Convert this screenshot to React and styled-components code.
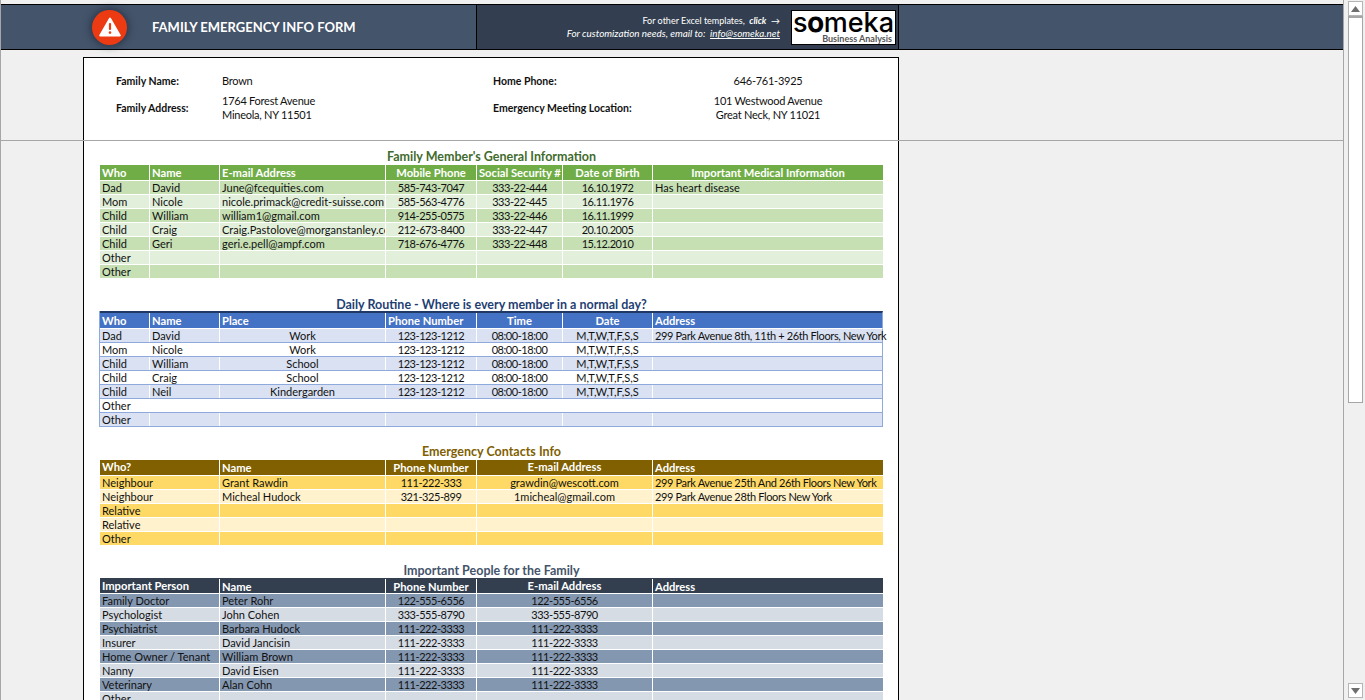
import React from "react";
import styled, { createGlobalStyle } from "styled-components";

const FIVE_COLS = "50px 70px 166px 91px 86px 90px 230px";
const FOUR_COLS = "120px 166px 91px 176px 230px";

const palettes = {
  green: { head: "#70ad47", odd: "#c6e0b4", even: "#e2efda", title: "#3f6b2d" },
  blue: { head: "#4472c4", odd: "#d9e1f2", even: "#fff", title: "#1f3f73" },
  gold: { head: "#806000", odd: "#ffd966", even: "#fff2cc", title: "#806000" },
  slate: { head: "#333f4f", odd: "#8497b0", even: "#d6dce4", title: "#44546a" },
};

const familyHead = [
  { t: "Who" },
  { t: "Name" },
  { t: "E-mail Address" },
  { t: "Mobile Phone", c: true },
  { t: "Social Security #", c: true },
  { t: "Date of Birth", c: true },
  { t: "Important Medical Information", c: true },
];
const familyRows = [
  ["Dad", "David", "June@fcequities.com", "585-743-7047", "333-22-444", "16.10.1972", "Has heart disease"],
  ["Mom", "Nicole", "nicole.primack@credit-suisse.com", "585-563-4776", "333-22-445", "16.11.1976", ""],
  ["Child", "William", "william1@gmail.com", "914-255-0575", "333-22-446", "16.11.1999", ""],
  ["Child", "Craig", "Craig.Pastolove@morganstanley.com", "212-673-8400", "333-22-447", "20.10.2005", ""],
  ["Child", "Geri", "geri.e.pell@ampf.com", "718-676-4776", "333-22-448", "15.12.2010", ""],
  ["Other", "", "", "", "", "", ""],
  ["Other", "", "", "", "", "", ""],
];

const routineHead = [
  { t: "Who" },
  { t: "Name" },
  { t: "Place" },
  { t: "Phone Number" },
  { t: "Time", c: true },
  { t: "Date", c: true },
  { t: "Address" },
];
const routineRows = [
  ["Dad", "David", "Work", "123-123-1212", "08:00-18:00", "M,T,W,T,F,S,S", "299 Park Avenue 8th, 11th + 26th Floors, New York"],
  ["Mom", "Nicole", "Work", "123-123-1212", "08:00-18:00", "M,T,W,T,F,S,S", ""],
  ["Child", "William", "School", "123-123-1212", "08:00-18:00", "M,T,W,T,F,S,S", ""],
  ["Child", "Craig", "School", "123-123-1212", "08:00-18:00", "M,T,W,T,F,S,S", ""],
  ["Child", "Neil", "Kindergarden", "123-123-1212", "08:00-18:00", "M,T,W,T,F,S,S", ""],
  ["Other", "", "", "", "", "", ""],
  ["Other", "", "", "", "", "", ""],
];

const contactHead = [
  { t: "Who?", up: true },
  { t: "Name" },
  { t: "Phone Number", c: true },
  { t: "E-mail Address", c: true, up: true },
  { t: "Address" },
];
const contactRows = [
  ["Neighbour", "Grant Rawdin", "111-222-333", "grawdin@wescott.com", "299 Park Avenue 25th And 26th Floors New York"],
  ["Neighbour", "Micheal Hudock", "321-325-899", "1micheal@gmail.com", "299 Park Avenue 28th Floors New York"],
  ["Relative", "", "", "", ""],
  ["Relative", "", "", "", ""],
  ["Other", "", "", "", ""],
];

const peopleHead = [
  { t: "Important Person", up: true },
  { t: "Name" },
  { t: "Phone Number", c: true },
  { t: "E-mail Address", c: true, up: true },
  { t: "Address" },
];
const peopleRows = [
  ["Family Doctor", "Peter Rohr", "122-555-6556", "122-555-6556", ""],
  ["Psychologist", "John Cohen", "333-555-8790", "333-555-8790", ""],
  ["Psychiatrist", "Barbara Hudock", "111-222-3333", "111-222-3333", ""],
  ["Insurer", "David Jancisin", "111-222-3333", "111-222-3333", ""],
  ["Home Owner / Tenant", "William Brown", "111-222-3333", "111-222-3333", ""],
  ["Nanny", "David Eisen", "111-222-3333", "111-222-3333", ""],
  ["Veterinary", "Alan Cohn", "111-222-3333", "111-222-3333", ""],
  ["Other", "", "", "", ""],
];

// lato's numerals run wider than the reference font, so pull those cells in a bit
const trackingFor = (text) => {
  if (/^[\d.:-]+$/.test(text)) return -0.45;
  if (/^\d+ Park/.test(text)) return -0.36;
  return 0;
};

const App = () => {
  return (
    <Window>
      <GlobalStyle />
      <Main>
        <FrozenPane>
          <Banner>
            <BannerLeft>
              <WarningBadge>
                <svg width="22" height="20" viewBox="0 0 22 20">
                  <path d="M11 1.5 L20.8 18.5 H1.2 Z" fill="#fff" stroke="#fff" strokeWidth="2" strokeLinejoin="round" />
                  <rect x="9.9" y="6" width="2.2" height="7" rx="1" fill="#ec3b13" />
                  <circle cx="11" cy="15.6" r="1.3" fill="#ec3b13" />
                </svg>
              </WarningBadge>
              <BannerTitle>FAMILY EMERGENCY INFO FORM</BannerTitle>
            </BannerLeft>
            <BannerMid>
              <Promo>
                <PromoLine>
                  For other Excel templates,&nbsp; <b><i>click</i></b> &nbsp;→
                </PromoLine>
                <PromoLine $italic>
                  For customization needs, email to:&nbsp; <u>info@someka.net</u>
                </PromoLine>
              </Promo>
              <Logo>
                <LogoWord>
                  s<LogoO>o</LogoO>meka
                </LogoWord>
                <LogoSub>Business Analysis</LogoSub>
              </Logo>
            </BannerMid>
          </Banner>
          <TopSheet>
            <InfoGrid>
              <InfoLabel>Family Name:</InfoLabel>
              <InfoValue>Brown</InfoValue>
              <InfoLabel>Home Phone:</InfoLabel>
              <InfoValue $center>646-761-3925</InfoValue>
              <InfoLabel>Family Address:</InfoLabel>
              <InfoValue>
                1764 Forest Avenue
                <br />
                Mineola, NY 11501
              </InfoValue>
              <InfoLabel>Emergency Meeting Location:</InfoLabel>
              <InfoValue $center>
                101 Westwood Avenue
                <br />
                Great Neck, NY 11021
              </InfoValue>
            </InfoGrid>
          </TopSheet>
        </FrozenPane>
        <BottomPane>
          <Sheet>
            <DataTable
              tone="green"
              top={8}
              titleLine={16}
              title="Family Member's General Information"
              cols={FIVE_COLS}
              head={familyHead}
              rows={familyRows}
              centered={[3, 4, 5]}
            />
            <DataTable
              tone="blue"
              top={16}
              titleLine={20}
              title="Daily Routine - Where is every member in a normal day?"
              cols={FIVE_COLS}
              head={routineHead}
              rows={routineRows}
              centered={[2, 3, 4, 5]}
              boxed
            />
            <DataTable
              tone="gold"
              top={17}
              titleLine={16}
              title="Emergency Contacts Info"
              cols={FOUR_COLS}
              head={contactHead}
              rows={contactRows}
              centered={[2, 3]}
            />
            <DataTable
              tone="slate"
              top={16}
              titleLine={18}
              headDrop={1}
              title="Important People for the Family"
              cols={FOUR_COLS}
              head={peopleHead}
              rows={peopleRows}
              centered={[2, 3]}
            />
          </Sheet>
        </BottomPane>
      </Main>
      <ScrollGutter>
        <ScrollBar>
          <ScrollButton>
            <svg width="9" height="6" viewBox="0 0 9 6"><path d="M4.5 0 L9 6 H0 Z" fill="#6e6e6e" /></svg>
          </ScrollButton>
          <ScrollThumb />
          <ScrollTrack />
          <ScrollButton>
            <svg width="9" height="6" viewBox="0 0 9 6"><path d="M0 0 H9 L4.5 6 Z" fill="#6e6e6e" /></svg>
          </ScrollButton>
        </ScrollBar>
      </ScrollGutter>
    </Window>
  );
};

const DataTable = ({ tone, top, titleLine, headDrop = 0, title, cols, head, rows, centered, boxed }) => {
  const p = palettes[tone];
  return (
    <Section $top={top}>
      <SectionTitle $color={p.title} $line={titleLine}>
        {title}
      </SectionTitle>
      <HeadRow $cols={cols} $bg={p.head} $boxed={boxed} $drop={headDrop}>
        {head.map((h, i) => (
          <HeadCell key={i} $center={h.c} $up={h.up}>
            {h.t}
          </HeadCell>
        ))}
      </HeadRow>
      {rows.map((row, r) => (
        <BodyRow key={r} $cols={cols} $bg={r % 2 === 0 ? p.odd : p.even} $boxed={boxed}>
          {row.map((text, i) => (
            <BodyCell
              key={i}
              $center={centered.includes(i)}
              $spill={boxed && i === row.length - 1}
              $track={trackingFor(text)}
            >
              {text}
            </BodyCell>
          ))}
        </BodyRow>
      ))}
    </Section>
  );
};

const GlobalStyle = createGlobalStyle`
  html, body {
    margin: 0;
    padding: 0;
    height: 100%;
    overflow: hidden;
    background: #f0f0f0;
  }
  body {
    font-family: "Lato", "Liberation Sans", sans-serif;
    font-size: 11px;
    color: #111;
  }
`;

const Window = styled.div`
  display: flex;
  height: 700px;
  width: 1365px;
  overflow: hidden;
  background: #f0f0f0;
`;
const Main = styled.div`
  width: 1344px;
  flex: none;
  box-sizing: border-box;
  display: flex;
  flex-direction: column;
  border-left: 1px solid #a6a6a6;
  border-right: 1px solid #a6a6a6;
`;
const FrozenPane = styled.div`
  height: 141px;
  flex: none;
  box-sizing: border-box;
  padding-top: 4px;
  border-bottom: 1px solid #a6a6a6;
  display: flex;
  flex-direction: column;
`;
const Banner = styled.div`
  height: 46px;
  flex: none;
  box-sizing: border-box;
  display: flex;
  background: #44546a;
  border-top: 1px solid #000;
  border-bottom: 1px solid #000;
`;
const BannerLeft = styled.div`
  width: 475px;
  box-sizing: border-box;
  display: flex;
  align-items: center;
  gap: 25px;
  padding-left: 91px;
`;
const WarningBadge = styled.div`
  width: 35px;
  height: 35px;
  border-radius: 50%;
  background: #ec3b13;
  box-shadow: 0 0 7px 2px rgba(25, 35, 55, 0.55);
  display: flex;
  align-items: center;
  justify-content: center;
`;
const BannerTitle = styled.div`
  color: #fff;
  font-size: 13px;
  font-weight: 700;
  white-space: nowrap;
`;
const BannerMid = styled.div`
  width: 423px;
  box-sizing: border-box;
  background: #333f50;
  border-left: 1px solid #000;
  border-right: 1px solid #000;
  display: flex;
  align-items: center;
  justify-content: flex-end;
  gap: 11px;
  padding-right: 2px;
`;
const Promo = styled.div`
  display: flex;
  flex-direction: column;
  align-items: flex-end;
  color: #fff;
  line-height: 13px;
  white-space: nowrap;
`;
const PromoLine = styled.div`
  font-style: ${(p) => (p.$italic ? "italic" : "normal")};
  font-size: ${(p) => (p.$italic ? 9.9 : 9)}px;
`;
const Logo = styled.div`
  width: 105px;
  height: 35px;
  box-sizing: border-box;
  background: #fff;
  border: 1px solid #000;
  display: flex;
  flex-direction: column;
  align-items: center;
`;
const LogoWord = styled.div`
  height: 23px;
  font-family: "Inter", sans-serif;
  font-size: 27px;
  font-weight: 500;
  line-height: 23px;
  color: #000;
`;
const LogoO = styled.span`
  -webkit-text-stroke: 1.2px #000;
`;
const LogoSub = styled.div`
  align-self: flex-end;
  padding-right: 3px;
  font-size: 9px;
  font-weight: 700;
  line-height: 10px;
  color: #555;
`;
const TopSheet = styled.div`
  flex: 1;
  margin: 7px 0 0 82px;
  width: 816px;
  box-sizing: border-box;
  background: #fff;
  border: 1px solid #000;
  border-bottom: none;
  padding: 16px 0 0 32px;
`;
const InfoGrid = styled.div`
  display: grid;
  grid-template-columns: 106px 271px 160px 230px;
  grid-template-rows: 14px 28px;
  row-gap: 6px;
  line-height: 14px;
  align-items: center;
`;
const InfoLabel = styled.div`
  font-size: 10.5px;
  font-weight: 700;
`;
const InfoValue = styled.div`
  letter-spacing: -0.25px;
  text-align: ${(p) => (p.$center ? "center" : "left")};
`;
const BottomPane = styled.div`
  flex: 1;
  min-height: 0;
  overflow: hidden;
`;
const Sheet = styled.div`
  margin-left: 82px;
  width: 816px;
  height: 100%;
  box-sizing: border-box;
  background: #fff;
  border-left: 1px solid #000;
  border-right: 1px solid #000;
  padding-left: 16px;
  overflow: hidden;
`;
const Section = styled.section`
  margin-top: ${(p) => p.$top}px;
  width: 783px;
`;
const SectionTitle = styled.div`
  height: 16px;
  line-height: ${(p) => p.$line}px;
  text-align: center;
  font-size: 12.5px;
  font-weight: 700;
  color: ${(p) => p.$color};
`;
const HeadRow = styled.div`
  display: grid;
  grid-template-columns: ${(p) => p.$cols};
  background: ${(p) => p.$bg};
  height: ${(p) => (p.$boxed ? 18 : 16)}px;
  box-sizing: border-box;
  padding-top: ${(p) => p.$drop}px;
  border-bottom: 1px solid #fff;
  border-top: ${(p) => (p.$boxed ? "2px solid #1f3864" : "none")};
  ${(p) => p.$boxed && "box-shadow: -1px 0 0 #8ea9db; border-right: 1px solid #8ea9db;"}
`;
const HeadCell = styled.div`
  color: #fff;
  font-size: 11.2px;
  font-weight: 700;
  line-height: ${(p) => (p.$up ? 13 : 15)}px;
  padding: 0 2px;
  text-align: ${(p) => (p.$center ? "center" : "left")};
  white-space: nowrap;
  overflow: hidden;
  box-sizing: border-box;
  border-right: 1px solid #fff;
  &:last-child {
    border-right: none;
  }
`;
const BodyRow = styled.div`
  display: grid;
  grid-template-columns: ${(p) => p.$cols};
  background: ${(p) => p.$bg};
  height: 14px;
  box-sizing: border-box;
  border-bottom: 1px solid ${(p) => (p.$boxed ? "#8ea9db" : "#fff")};
  ${(p) => p.$boxed && "box-shadow: -1px 0 0 #8ea9db; border-right: 1px solid #8ea9db;"}
`;
const BodyCell = styled.div`
  font-size: 11px;
  line-height: 13px;
  padding: 0 2px;
  letter-spacing: ${(p) => p.$track}px;
  text-align: ${(p) => (p.$center ? "center" : "left")};
  white-space: nowrap;
  overflow: ${(p) => (p.$spill ? "visible" : "hidden")};
  box-sizing: border-box;
  border-right: 1px solid #fff;
  &:last-child {
    border-right: none;
  }
`;
const ScrollGutter = styled.div`
  flex: 1;
  padding: 1px 2px 2px 4px;
  display: flex;
`;
const ScrollBar = styled.div`
  width: 15px;
  display: flex;
  flex-direction: column;
`;
const ScrollButton = styled.div`
  height: 15px;
  flex: none;
  box-sizing: border-box;
  border: 1px solid #b5b5b5;
  background: #fff;
  display: flex;
  align-items: center;
  justify-content: center;
`;
const ScrollThumb = styled.div`
  height: 387px;
  flex: none;
  box-sizing: border-box;
  background: #fff;
  border: 1px solid #a6a6a6;
  border-top-width: 2px;
`;
const ScrollTrack = styled.div`
  flex: 1;
  background: #f0f0f0;
`;

export default App;
